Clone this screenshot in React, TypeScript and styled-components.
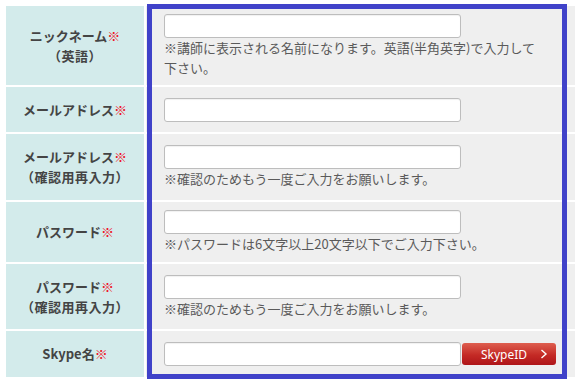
import React from "react";
import styled, { createGlobalStyle } from "styled-components";

const Global = createGlobalStyle`
  html, body { margin: 0; padding: 0; background: #fff; }
  body { font-family: "Noto Sans CJK JP", "Noto Sans", sans-serif; }
`;

const Wrapper = styled.div`
  position: relative;
  width: 580px;
  height: 387px;
  box-sizing: border-box;
  padding: 6px 0 0 6px;
  background: #fff;
`;

const FormGrid = styled.div`
  display: grid;
  grid-template-columns: 138px 429px;
  grid-template-rows: 79px 45px 66px 60px 65px 46px;
  gap: 2px;
`;

const LabelCell = styled.div`
  background: #d3ebeb;
  display: flex;
  flex-direction: column;
  align-items: center;
  justify-content: center;
  font-size: 13px;
  line-height: 20px;
  font-weight: bold;
  color: #444;
`;

const Req = styled.span`
  color: #f0101e;
  font-weight: bold;
`;

const Sub = styled.span`
  letter-spacing: 0.5px;
`;

const FieldCell = styled.div`
  background: #efefef;
  display: flex;
  flex-direction: column;
  justify-content: center;
  padding: 0 26px 0 18px;
`;

const InputRow = styled.div`
  display: flex;
  align-items: center;
  gap: 1px;
`;

const TextInput = styled.input`
  box-sizing: border-box;
  flex-shrink: 0;
  width: 297px;
  height: 24px;
  margin: 0;
  border: 1px solid #bdbdbd;
  border-radius: 3px;
  background: #fff;
  box-shadow: inset 0 1px 1px rgba(0, 0, 0, 0.06);
  outline: none;
`;

const Note = styled.div`
  font-size: 13px;
  line-height: 20px;
  color: #5a5a5a;
`;

const SkypeButton = styled.button`
  box-sizing: border-box;
  flex-shrink: 0;
  width: 94px;
  height: 22px;
  margin: 0;
  padding: 0 8px 0 0;
  border: none;
  border-radius: 3px;
  background: linear-gradient(#de5e4f, #c42a25 55%, #ae1519);
  color: #fff;
  font-family: "Noto Sans", "Liberation Sans", sans-serif;
  font-size: 12px;
  display: flex;
  align-items: center;
  justify-content: flex-end;
  gap: 13px;
`;

const Chevron = styled.svg`
  width: 8px;
  height: 10px;
`;

const Highlight = styled.div`
  position: absolute;
  left: 147px;
  top: 4px;
  width: 420px;
  height: 375px;
  box-sizing: border-box;
  border: 5px solid #4042c9;
  pointer-events: none;
`;

type Row = {
  label: string;
  sub?: string;
  note?: string[];
  skype?: boolean;
};

const rows: Row[] = [
  {
    label: "ニックネーム",
    sub: "（英語）",
    note: ["※講師に表示される名前になります。英語(半角英字)で入力して", "下さい。"],
  },
  { label: "メールアドレス" },
  {
    label: "メールアドレス",
    sub: "（確認用再入力）",
    note: ["※確認のためもう一度ご入力をお願いします。"],
  },
  {
    label: "パスワード",
    note: ["※パスワードは6文字以上20文字以下でご入力下さい。"],
  },
  {
    label: "パスワード",
    sub: "（確認用再入力）",
    note: ["※確認のためもう一度ご入力をお願いします。"],
  },
  { label: "Skype名", skype: true },
];

export default function App() {
  return (
    <>
      <Global />
      <Wrapper>
        <FormGrid>
          {rows.map((r, i) => (
            <React.Fragment key={i}>
              <LabelCell>
                <span>
                  {r.label}
                  <Req>※</Req>
                </span>
                {r.sub && <Sub>{r.sub}</Sub>}
              </LabelCell>
              <FieldCell>
                <InputRow>
                  <TextInput type="text" />
                  {r.skype && (
                    <SkypeButton type="button">
                      <span>SkypeID</span>
                      <Chevron viewBox="0 0 8 10">
                        <path d="M1.5 1 L6 5 L1.5 9" fill="none" stroke="#fff" strokeWidth="1.4" />
                      </Chevron>
                    </SkypeButton>
                  )}
                </InputRow>
                {r.note && (
                  <Note>
                    {r.note.map((n, j) => (
                      <div key={j}>{n}</div>
                    ))}
                  </Note>
                )}
              </FieldCell>
            </React.Fragment>
          ))}
        </FormGrid>
        <Highlight />
      </Wrapper>
    </>
  );
}
